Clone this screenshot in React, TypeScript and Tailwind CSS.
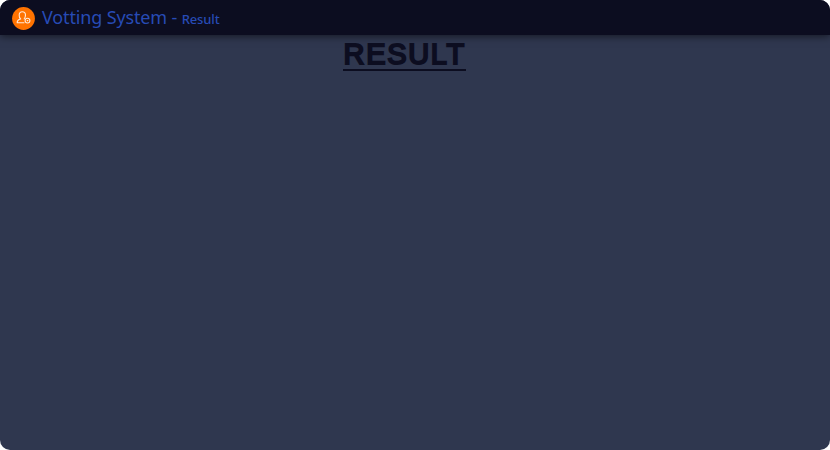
export default function App() {
  return (
    <div className="flex h-[450px] w-[830px] flex-col overflow-hidden rounded-[10px] bg-[#2f374f]">
      <header className="flex h-[35px] shrink-0 items-center bg-[#0c0d20] pl-3 shadow-[0_1px_8px_rgba(0,0,0,0.6)]">
        <svg className="mt-px" width="23" height="23" viewBox="0 0 23 23" fill="none" stroke="#ffe9d8" strokeWidth="1.1" strokeLinecap="round" strokeLinejoin="round">
          <circle cx="11.5" cy="11.5" r="11.4" fill="#ff7300" stroke="none" />
          <path d="M12 15.800H5.200c-.2-2.500 1-3.200 3.500-3.900C7.500 11 7.100 9.500 7.200 8c.1-2 1.300-3.200 3.100-3.200S13.400 6 13.500 8c0 1.500-.5 3-1.300 3.900" />
          <circle cx="15.500" cy="13.600" r="2.400" />
          <path d="M15.200 13.600h.6" />
        </svg>
        <h1 className="ml-[7px] pb-[2px] font-['Noto_Sans',sans-serif] text-[18px] leading-none tracking-[-0.15px] text-[#274bb5]">Votting System - <span className="text-[13px] font-medium tracking-[-0.1px]">Result</span></h1>
      </header>
      <main className="flex justify-center pr-[22px] pt-[4px]">
        <h2 className="w-[123px] whitespace-nowrap border-b-2 border-[#0c0d20] pl-px font-['Liberation_Sans',sans-serif] text-[29px] font-normal leading-[30px] tracking-[1.7px] text-[#0c0d20] [-webkit-text-stroke:2px_#0c0d20]">RESULT</h2>
      </main>
    </div>
  );
}
